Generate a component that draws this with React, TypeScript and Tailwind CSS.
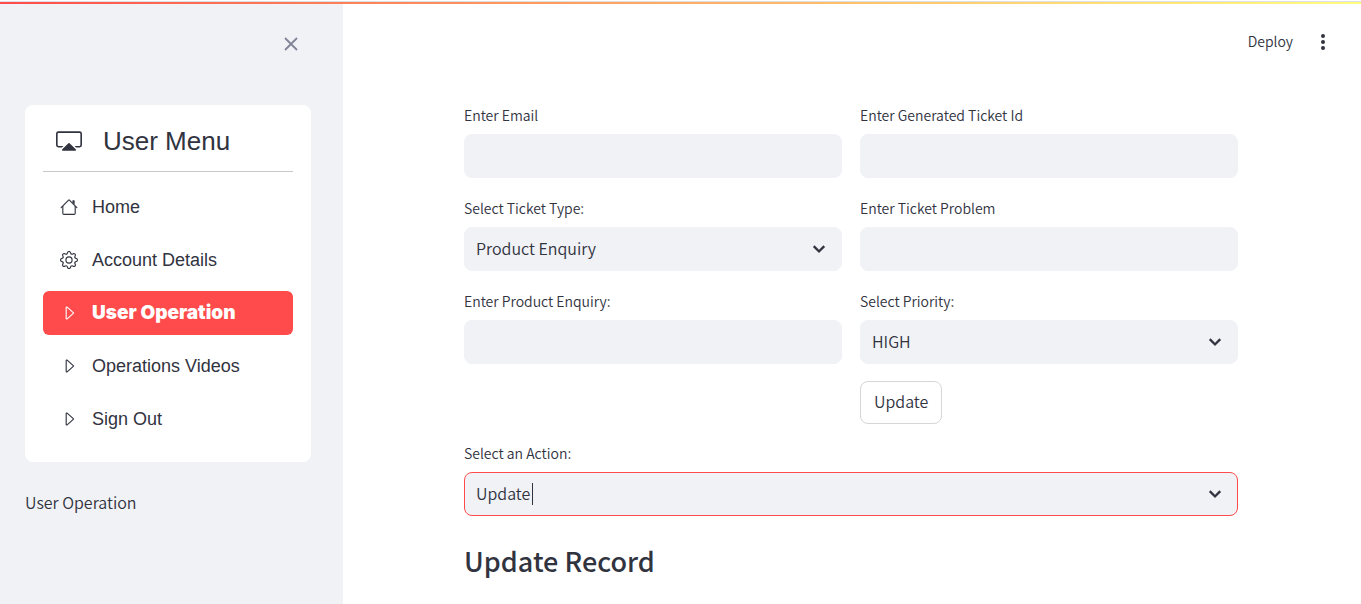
import React, { useId, useState } from "react";
import { BsCaretRight, BsCast, BsGear } from "react-icons/bs";

const sans = "font-['Noto_Sans_CJK_SC','Noto_Sans',sans-serif]";
const field = "h-11 w-full rounded-lg border bg-[#f0f2f6] px-[11px] pb-0.5 text-base outline-none";

function HouseIcon({ className }: { className?: string }) {
  return (
    <svg viewBox="0 0 16 16" fill="currentColor" className={className} aria-hidden="true">
      <path fillRule="evenodd" d="M2 13.5V7h1v6.5a.5.5 0 0 0 .5.5h9a.5.5 0 0 0 .5-.5V7h1v6.5a1.5 1.5 0 0 1-1.5 1.5h-9A1.5 1.5 0 0 1 2 13.5zm11-11V6l-2-2V2.5a.5.5 0 0 1 .5-.5h1a.5.5 0 0 1 .5.5z" />
      <path fillRule="evenodd" d="M7.293 1.5a1 1 0 0 1 1.414 0l6.647 6.646a.5.5 0 0 1-.708.708L8 2.207 1.354 8.854a.5.5 0 1 1-.708-.708L7.293 1.5z" />
    </svg>
  );
}

function TextField({ label }: { label: string }) {
  const id = useId();
  return (
    <div>
      <label htmlFor={id} className="mb-[7px] block text-sm leading-6">{label}</label>
      <input id={id} type="text" className={`${field} border-[#f0f2f6]`} />
    </div>
  );
}

function SelectField({ label, options, active = false }: { label: string; options: string[]; active?: boolean }) {
  const id = useId();
  const [value, setValue] = useState(options[0]);
  return (
    <div>
      <label htmlFor={id} className="mb-[7px] block text-sm leading-6">{label}</label>
      <div className="relative">
        <select
          id={id}
          value={value}
          onChange={(e) => setValue(e.target.value)}
          className={`${field} appearance-none ${active ? "border-[#ff4b4b]" : "border-[#f0f2f6]"}`}
        >
          {options.map((o) => (
            <option key={o}>{o}</option>
          ))}
        </select>
        {active && <span className="absolute top-[11px] left-[68px] h-[22px] w-px bg-[#31333f]" />}
        <svg viewBox="0 0 8 8" fill="currentColor" className="pointer-events-none absolute top-[15px] right-4 size-3.5" aria-hidden="true">
          <path d="M1.5 2l-.9.9L4 6.2l3.4-3.3-.9-.9L4 4.5z" stroke="currentColor" strokeWidth=".2" strokeLinejoin="round" />
        </svg>
      </div>
    </div>
  );
}

const menu = [
  { label: "Home", Icon: HouseIcon },
  { label: "Account Details", Icon: BsGear },
  { label: "User Operation", Icon: BsCaretRight, active: true },
  { label: "Operations Videos", Icon: BsCaretRight },
  { label: "Sign Out", Icon: BsCaretRight },
];

function Sidebar() {
  return (
    <aside className="w-[343px] shrink-0 bg-[#f0f2f6] px-[25px] pt-[31px]">
      <div className="flex justify-end pr-[18px]">
        <button type="button" aria-label="Close sidebar" className="flex size-[18px] items-center justify-center text-[#808495]">
          <svg viewBox="0 0 14 14" className="size-3.5" fill="none" stroke="currentColor" strokeWidth="1.8" aria-hidden="true">
            <path d="M1 1l12 12M13 1L1 13" />
          </svg>
        </button>
      </div>
      <nav className="mt-[52px] mr-[7px] rounded-lg bg-white px-[18px] pb-[21px] font-['Liberation_Sans',Arial,sans-serif]">
        <div className="flex h-[67px] items-center border-b border-[#c8c9cc] pt-1.5 pl-[13px]">
          <BsCast className="size-[26px]" />
          <h2 className="ml-[21px] text-[26px] leading-8">User Menu</h2>
        </div>
        <ul className="mt-[13px] flex flex-col gap-[9px]">
          {menu.map(({ label, Icon, active }) => (
            <li key={label}>
              <a
                href="#"
                aria-current={active ? "page" : undefined}
                className={`flex h-11 items-center gap-[14px] rounded-md pl-[17px] ${
                  active ? "bg-[#ff4b4b] font-['Inter',sans-serif] text-[19px] font-black text-white" : "text-lg"
                }`}
              >
                <Icon className="size-[18px]" />
                {label}
              </a>
            </li>
          ))}
        </ul>
      </nav>
      <p className="mt-[26px] text-base leading-7">User Operation</p>
    </aside>
  );
}

export default function App() {
  return (
    <div className={`flex min-h-screen flex-col bg-white font-[350] text-[#31333f] ${sans}`}>
      <div className="mt-px h-[3px] border-t border-[#dcdfe3] bg-linear-to-r from-[#ff4b4b] to-[#fffd80]" />
      <div className="flex flex-1">
        <Sidebar />
        <div className="min-w-0 flex-1 pr-0.5">
          <header className="flex h-[76px] items-center justify-end gap-[22px] pr-7">
            <button type="button" className="pb-0.5 text-sm leading-6">Deploy</button>
            <button type="button" aria-label="Main menu" className="flex w-4 justify-center">
              <svg viewBox="0 0 4 16" className="h-4 w-1" fill="currentColor" aria-hidden="true">
                <circle cx="2" cy="2" r="2" />
                <circle cx="2" cy="8" r="2" />
                <circle cx="2" cy="14" r="2" />
              </svg>
            </button>
          </header>
          <main className="mx-auto mt-[23px] flex max-w-[774px] flex-col gap-[17px]">
            <div className="grid grid-cols-2 gap-[18px]">
              <TextField label="Enter Email" />
              <TextField label="Enter Generated Ticket Id" />
              <SelectField label="Select Ticket Type:" options={["Product Enquiry"]} />
              <TextField label="Enter Ticket Problem" />
              <TextField label="Enter Product Enquiry:" />
              <SelectField label="Select Priority:" options={["HIGH", "MEDIUM", "LOW"]} />
            </div>
            <div className="grid grid-cols-2 gap-[18px]">
              <button type="button" className="col-start-2 h-[43px] justify-self-start rounded-lg border border-[#d6d6d9] px-[13px] pb-[3px] text-base">
                Update
              </button>
            </div>
            <SelectField label="Select an Action:" options={["Update"]} active />
            <h3 className="mt-2 text-[27px] leading-10 font-medium">Update Record</h3>
          </main>
        </div>
      </div>
    </div>
  );
}
